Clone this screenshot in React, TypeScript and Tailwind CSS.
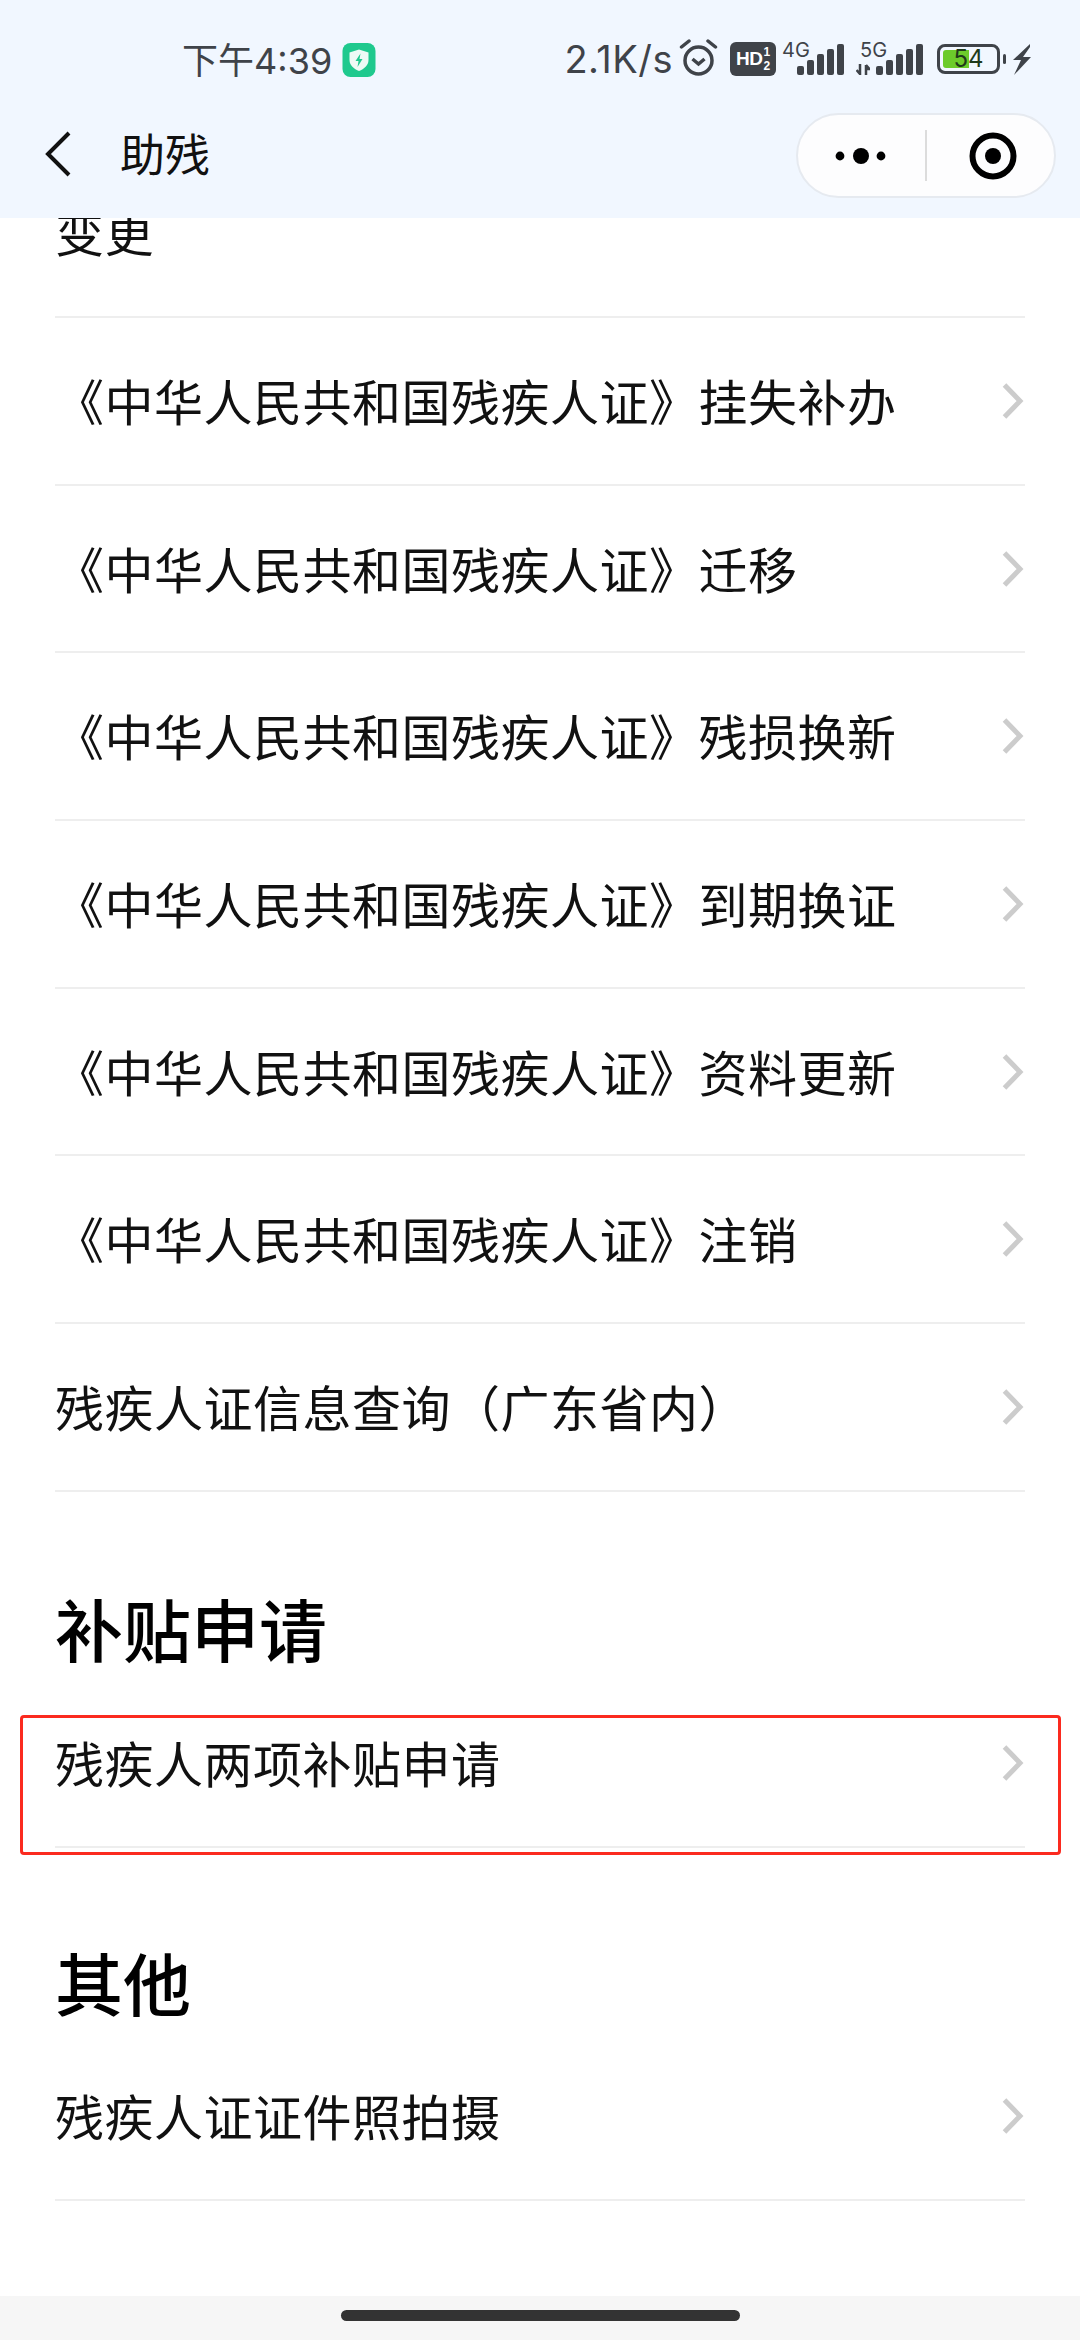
const cjk = "font-['Noto_Sans_CJK_SC','Noto_Sans',sans-serif]";
const latin = "font-['Inter','Liberation_Sans',sans-serif]";

function Chevron() {
  return (
    <svg width="26" height="40" viewBox="0 0 26 40" className="-mr-[1px] shrink-0">
      <path d="M4.5 4 L20 20 L4.5 36" fill="none" stroke="#cccccc" strokeWidth="5" />
    </svg>
  );
}

function Row({ label }: { label: string }) {
  return (
    <div className="relative flex h-[167.7px] items-center justify-between border-b-2 border-[#eeeeee]">
      <span className="pb-[2px] text-[49px] leading-[60px] tracking-[0.5px] text-[#111111]">{label}</span>
      <Chevron />
    </div>
  );
}

function Bars() {
  const xs = [0, 10, 20, 30, 40];
  const hs = [9, 15, 21, 26, 31];
  return (
    <svg width="47" height="31" viewBox="0 0 47 31" className="shrink-0">
      {xs.map((x, i) => (
        <rect key={x} x={x} y={31 - hs[i]} width="7" height={hs[i]} rx="2" fill="#3f4349" />
      ))}
    </svg>
  );
}

function StatusBar() {
  return (
    <div className="flex h-[113px] items-start justify-between pl-[182px] pr-[49px] pt-[40px] text-[#3f4349]">
      <div className="flex items-center gap-[10px]">
        <span className={`${cjk} text-[36px] leading-[36px]`}>
          下午<span className={latin}>4:39</span>
        </span>
        <svg width="34" height="34" viewBox="0 0 33 34" className="shrink-0">
          <rect width="33" height="34" rx="8" fill="#1fc98e" />
          <path d="M16.5 6.5 L26 9.5 V17 C26 22.5 21.5 26 16.5 28 C11.5 26 7 22.5 7 17 V9.5 Z" fill="#eefaf5" />
          <path d="M18 10.5 L13 18 H16 L15 24 L20 16 H17 Z" fill="#1fc98e" />
        </svg>
      </div>
      <div className="flex items-start">
        <span className={`${latin} mt-[1px] text-[38px] leading-[36px] tracking-[0.5px]`}>2.1K/s</span>
        <svg width="39" height="38" viewBox="0 0 38 38" className="ml-[6px] -mt-[1px] shrink-0">
          <circle cx="19" cy="21.5" r="13.5" fill="none" stroke="#3f4349" strokeWidth="3.5" />
          <path d="M13 20 L19 25 L25 20" fill="none" stroke="#3f4349" strokeWidth="3.5" />
          <path d="M2 8 L9.5 2 M36 8 L28.5 2" stroke="#3f4349" strokeWidth="3.5" strokeLinecap="round" />
        </svg>
        <div className="ml-[12px] mt-[2px] flex h-[34px] w-[46px] items-center justify-center gap-[1px] rounded-[6px] bg-[#3f4349] font-['Liberation_Sans',sans-serif] font-bold text-white">
          <span className="text-[19px] leading-[18px] tracking-[-0.5px]">HD</span>
          <span className="flex flex-col items-center text-[12px] leading-[14px]">
            <span>1</span>
            <span>2</span>
          </span>
        </div>
        <div className="relative ml-[6px] mt-[4px] h-[31px] w-[62px] shrink-0">
          <span className={`${latin} absolute -top-[3px] left-0 text-[20px] leading-[19px]`}>4G</span>
          <div className="absolute bottom-0 right-0">
            <Bars />
          </div>
        </div>
        <div className="relative ml-[12px] mt-[4px] h-[31px] w-[67px] shrink-0">
          <span className={`${latin} absolute -top-[3px] left-[4px] text-[20px] leading-[19px]`}>5G</span>
          <svg width="14" height="11" viewBox="0 0 14 11" className="absolute bottom-0 left-0">
            <path d="M4 0 V10 M0.5 6 L4 10 L4 4 M10 11 V1 M10 1 L13.5 5 L10 5" fill="none" stroke="#3f4349" strokeWidth="2.5" />
          </svg>
          <div className="absolute bottom-0 right-0">
            <Bars />
          </div>
        </div>
        <div className="relative ml-[14px] mt-[4px] flex h-[30px] w-[63px] shrink-0 items-center justify-center rounded-[8px] border-[3px] border-[#3f4349]">
          <div className="absolute bottom-[3px] left-[3px] top-[3px] w-[26px] rounded-l-[3px] bg-[#6ccb2b]" />
          <span className={`${latin} relative text-[24px] leading-[24px] text-[#1f3a1a]`}>54</span>
        </div>
        <div className="ml-[3px] mt-[14px] h-[10px] w-[3px] shrink-0 rounded-[2px] bg-[#3f4349]" />
        <svg width="18" height="31" viewBox="0 0 18 31" className="ml-[7px] mt-[4px] shrink-0">
          <path d="M17 0 L0 16 L8 16 L1 31 L18 13 L10 13 L17 3 Z" fill="#3f4349" />
        </svg>
      </div>
    </div>
  );
}

function NavBar() {
  return (
    <div className="flex h-[85px] items-center justify-between pl-[45px] pr-[24px]">
      <div className="flex items-center">
        <svg width="26" height="46" viewBox="0 0 26 46" className="-mt-[4px] shrink-0">
          <path d="M24 2 L3 23 L24 44" fill="none" stroke="#111111" strokeWidth="4" />
        </svg>
        <span className="ml-[49px] -mt-[6px] text-[45px] leading-[50px] text-[#111111]">助残</span>
      </div>
      <div className="flex h-[85px] w-[260px] items-center rounded-full border-2 border-[#e6eaf0] bg-[#fdfdfe]">
        <svg width="62" height="18" viewBox="0 0 62 18" className="ml-[32px] shrink-0">
          <circle cx="10" cy="9" r="4.4" fill="#000" />
          <circle cx="31" cy="9" r="8" fill="#000" />
          <circle cx="51" cy="9" r="4.4" fill="#000" />
        </svg>
        <div className="ml-[33px] h-[51px] w-[2px] bg-[#dcdcdc]" />
        <svg width="48" height="48" viewBox="0 0 48 48" className="ml-[42px] shrink-0">
          <circle cx="24" cy="24" r="20.5" fill="none" stroke="#000" strokeWidth="6" />
          <circle cx="24" cy="24" r="8" fill="#000" />
        </svg>
      </div>
    </div>
  );
}

export default function App() {
  const names = ["挂失补办", "迁移", "残损换新", "到期换证", "资料更新", "注销"];
  return (
    <div className={`${cjk} flex h-[2340px] w-[1080px] flex-col overflow-hidden bg-white`}>
      <header className="relative z-10 h-[218px] shrink-0 bg-[#f1f7ff]">
        <StatusBar />
        <NavBar />
      </header>
      <main className="min-h-0 flex-1 px-[55px]">
        <div className="flex h-[100px] items-start border-b-2 border-[#eeeeee]">
          <span className="-mt-[17px] text-[49px] leading-[60px] tracking-[0.5px] text-[#111111]">变更</span>
        </div>
        {names.map((n) => (
          <Row key={n} label={`《中华人民共和国残疾人证》${n}`} />
        ))}
        <Row label="残疾人证信息查询（广东省内）" />
        <div className="flex h-[188px] items-end">
          <h2 className="text-[68px] font-medium leading-[104px] text-black">补贴申请</h2>
        </div>
        <div className="relative">
          <Row label="残疾人两项补贴申请" />
          <div className="absolute -bottom-[7px] -left-[35px] -right-[36px] top-[35px] rounded-[4px] border-[3px] border-[#fb2a1f]" />
        </div>
        <div className="flex h-[186px] items-end">
          <h2 className="text-[68px] font-medium leading-[104px] text-black">其他</h2>
        </div>
        <Row label="残疾人证证件照拍摄" />
      </main>
      <footer className="flex h-[44px] shrink-0 justify-center bg-[#f6f6f6] pt-[14px]">
        <div className="h-[11px] w-[399px] rounded-full bg-[#333333]" />
      </footer>
    </div>
  );
}
